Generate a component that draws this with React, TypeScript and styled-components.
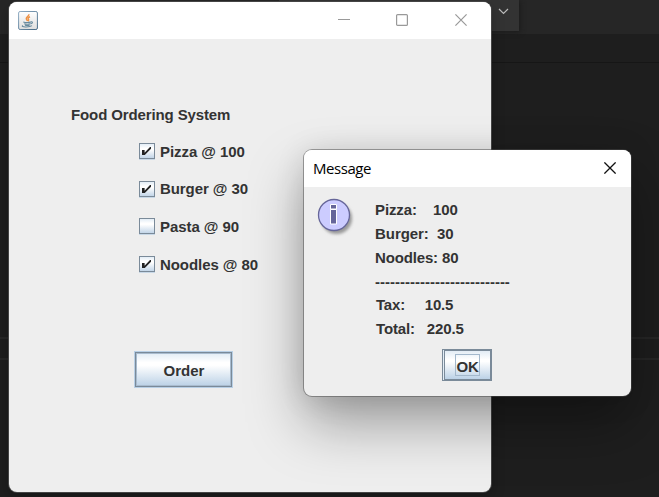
import React from 'react';
import styled, { createGlobalStyle } from 'styled-components';

const GlobalStyle = createGlobalStyle`
  * { box-sizing: border-box; }
  body { margin: 0; background: #1e1e1e; overflow: hidden; }
`;

const Desktop = styled.main`
  position: relative;
  width: 659px;
  height: 497px;
  overflow: hidden;
  background: #1e1e1e;
  color: #333;
  font: bold 15px/18px "Liberation Sans", Arial, sans-serif;
`;

const EditorBar = styled.div`
  height: 34px;
  padding-left: 279px;
  background: #262626;
`;

const EditorTab = styled.div`
  display: flex;
  justify-content: flex-end;
  width: 240px;
  height: 31px;
  padding: 7px 10px 0 0;
  background: #333;
  box-shadow: 1px 1px 5px #1a1a1a;
`;

const EditorTabs = styled.div`
  height: 29px;
  border-bottom: 1px solid #161616;
`;

const EditorPane = styled.div`
  height: 274px;
`;

const EditorLine = styled.div`
  height: 23px;
  border-top: 2px solid #272727;
  border-bottom: 2px solid #272727;
`;

const Window = styled.section<{ $x: number; $y: number; $w: number; $h: number; $active?: boolean }>`
  position: absolute;
  left: ${p => p.$x}px;
  top: ${p => p.$y}px;
  width: ${p => p.$w}px;
  height: ${p => p.$h}px;
  display: flex;
  flex-direction: column;
  border-radius: 8px;
  background: #eee;
  box-shadow: ${p => p.$active
    ? '0 0 0 1px rgba(75, 75, 75, .5), 0 28px 56px rgba(0, 0, 0, .34), 0 2px 30px rgba(0, 0, 0, .12)'
    : '0 0 0 1px #454545, 0 5px 14px rgba(0, 0, 0, .25)'};
`;

const TitleBar = styled.header`
  display: flex;
  align-items: center;
  flex: 0 0 37px;
  padding: 0 9px;
  border-radius: 8px 8px 0 0;
  background: #fff;
`;

const Controls = styled.div`
  display: flex;
  align-items: center;
  gap: 45px;
  margin: -2px 0 0 auto;
  padding-right: 15px;
`;

const DialogTitle = styled.h1`
  flex: 1;
  margin: -2px 0 0;
  color: #000;
  font: 400 15px/20px "Open Sans", sans-serif;
  letter-spacing: -0.45px;
`;

const DialogClose = styled.div`
  display: flex;
  margin-top: -2px;
  padding-right: 6px;
`;

const FormBody = styled.div`
  padding: 67px 0 0 62px;
`;

const Heading = styled.h2`
  margin: 0;
  font-size: 15px;
  line-height: 18px;
  letter-spacing: -0.12px;
`;

const Options = styled.div`
  display: grid;
  grid-auto-rows: 37.7px;
  padding: 9px 0 0 68px;
  letter-spacing: -0.07px;
`;

const Option = styled.label`
  display: flex;
  align-items: center;
  gap: 5px;
  height: 37px;
`;

const CheckFrame = styled.span`
  display: flex;
  width: 16px;
  height: 16px;
  margin-top: -1px;
  border: 1px solid #7a8a99;
  background: linear-gradient(#e3edf6 0%, #fff 30%, #fff 40%, #c2d5e8 100%);
  box-shadow: 0 1px #c8d8e7;
`;

const OrderButton = styled.button`
  display: block;
  width: 99px;
  height: 37px;
  margin: 67px 0 0 63px;
  padding: 3px 0 0 1px;
  border: 1px solid #b8cfe5;
  outline: 0;
  background: linear-gradient(#dfeaf4 0%, #fff 30%, #fff 38%, #b8cfe5 100%);
  box-shadow: inset 0 0 0 1px #7a8a99, inset 0 0 0 2px #a9bccf;
  color: #333;
  font: inherit;
`;

const DialogBody = styled.div`
  display: flex;
  flex-direction: column;
  flex: 1;
`;

const Message = styled.div`
  display: flex;
  gap: 17px;
  padding: 11px 0 0 12px;
`;

const Receipt = styled.div`
  display: flex;
  flex-direction: column;
`;

const ReceiptLine = styled.div<{ $indent?: number; $tracking?: number }>`
  height: 23.8px;
  padding-left: ${p => p.$indent ?? 0}px;
  line-height: 24px;
  letter-spacing: ${p => p.$tracking ?? 0}px;
  white-space: pre;
`;

const ReceiptRule = styled(ReceiptLine)`
  line-height: 26px;
`;

const OkButton = styled.button`
  display: flex;
  align-items: center;
  justify-content: center;
  width: 50px;
  height: 32px;
  margin: 8px 0 0 138px;
  padding: 1px 0 0 1px;
  border: 1px solid #7a8a99;
  background: linear-gradient(#dfeaf4 0%, #fff 32%, #fff 38%, #b8cfe5 100%);
  box-shadow: inset 1px 0 #e3edf6, inset 2px 0 #7a8a99, inset -1px -1px #7a8a99, inset 0 1px #7a8a99;
  color: #333;
  font: inherit;
`;

const FocusText = styled.span`
  width: 25px;
  height: 22px;
  border: 1px solid #a3b8cc;
  line-height: 23px;
  letter-spacing: -0.2px;
`;

function JavaIcon() {
  return (
    <svg width="20" height="20" viewBox="0 0 20 20" fill="none">
      <defs>
        <linearGradient id="java-face" x2="0" y2="1">
          <stop stopColor="#fff" /><stop offset="1" stopColor="#dedede" />
        </linearGradient>
        <linearGradient id="java-edge" x2="1" y2="1">
          <stop stopColor="#91adc4" /><stop offset="1" stopColor="#456985" />
        </linearGradient>
      </defs>
      <rect x=".6" y=".5" width="18.8" height="18" rx="1.5" fill="url(#java-face)" stroke="url(#java-edge)" />
      <path d="M10.8 3.2c.5 2-2.8 2.6-2.5 4.5.1 1 .9 1.5 1.2 2.3M12 5.8c-1.9.7-2.4 1.6-1.6 2.5.5.7.1 1.4-.6 1.7" stroke="#ee9144" strokeWidth="1.5" />
      <path d="M5.3 10.9c2 .7 5.7.6 7.9 0M6.2 12.7c1.9.6 4.3.6 6.2 0M7 14.2c1.7.5 3.2.5 4.6 0M13 10.8c2-.5 2 1.8-.4 2M4.8 14.6c-2.8 1.6 6.8 2 9.1.1" stroke="#66899d" strokeWidth="1.1" />
    </svg>
  );
}

function CloseIcon({ active = false }: { active?: boolean }) {
  return (
    <svg width="12" height="12" viewBox="0 0 12 12" fill="none" stroke={active ? '#111' : '#999'} strokeWidth={active ? 1.3 : 1.2}>
      <path d="m.4.4 11.2 11.2M11.6.4.4 11.6" />
    </svg>
  );
}

function CheckIcon() {
  return (
    <svg width="14" height="14" viewBox="0 0 14 14" fill="#222">
      <path d="M2 6h2.6v2.8L10 3h1v1.8L4.8 11H2z" />
    </svg>
  );
}

function InfoIcon() {
  return (
    <svg width="42" height="42" viewBox="0 0 42 42">
      <defs><filter id="info-shadow"><feGaussianBlur stdDeviation="1.5" /></filter></defs>
      <circle cx="20.5" cy="20.5" r="15.5" fill="#999" filter="url(#info-shadow)" />
      <circle cx="18" cy="17" r="15.5" fill="#ccf" stroke="#669" strokeWidth="1.3" />
      <path d="M14.5 6.5h6v4.5h-6zm0 5h6v14.5h-6z" fill="#669" stroke="#fff" />
    </svg>
  );
}

const items = [
  { name: 'Pizza @ 100', checked: true },
  { name: 'Burger @ 30', checked: true },
  { name: 'Pasta @ 90', checked: false },
  { name: 'Noodles @ 80', checked: true },
];

export default function App() {
  return (
    <Desktop>
      <GlobalStyle />
      <EditorBar>
        <EditorTab>
          <svg width="12" height="10" viewBox="0 0 12 10" fill="none" stroke="#bbb" strokeWidth="1.2"><path d="m2 2 4.5 4.5L11 2" /></svg>
        </EditorTab>
      </EditorBar>
      <EditorTabs />
      <EditorPane />
      <EditorLine />

      <Window $x={9} $y={2} $w={482} $h={490}>
        <TitleBar>
          <JavaIcon />
          <Controls>
            <svg width="14" height="12" viewBox="0 0 14 12"><path d="M1 5.5h12" stroke="#999" /></svg>
            <svg width="14" height="12" viewBox="0 0 14 12"><rect x=".6" y=".6" width="10.8" height="10.8" rx="1" fill="none" stroke="#999" strokeWidth="1.2" /></svg>
            <CloseIcon />
          </Controls>
        </TitleBar>
        <FormBody>
          <Heading>Food Ordering System</Heading>
          <Options>
            {items.map(item => (
              <Option key={item.name}>
                <CheckFrame>{item.checked && <CheckIcon />}</CheckFrame>
                {item.name}
              </Option>
            ))}
          </Options>
          <OrderButton>Order</OrderButton>
        </FormBody>
      </Window>

      <Window $x={304} $y={150} $w={327} $h={246} $active>
        <TitleBar>
          <DialogTitle>Message</DialogTitle>
          <DialogClose><CloseIcon active /></DialogClose>
        </TitleBar>
        <DialogBody>
          <Message>
            <InfoIcon />
            <Receipt>
              <ReceiptLine $tracking={-0.12}>{'Pizza:    100'}</ReceiptLine>
              <ReceiptLine $tracking={-0.06}>{'Burger:  30'}</ReceiptLine>
              <ReceiptLine $tracking={-0.15}>{'Noodles: 80'}</ReceiptLine>
              <ReceiptRule>{'---------------------------'}</ReceiptRule>
              <ReceiptLine $indent={1} $tracking={-0.2}>{'Tax:     10.5'}</ReceiptLine>
              <ReceiptLine $indent={1} $tracking={-0.15}>{'Total:   220.5'}</ReceiptLine>
            </Receipt>
          </Message>
          <OkButton><FocusText>OK</FocusText></OkButton>
        </DialogBody>
      </Window>
    </Desktop>
  );
}
